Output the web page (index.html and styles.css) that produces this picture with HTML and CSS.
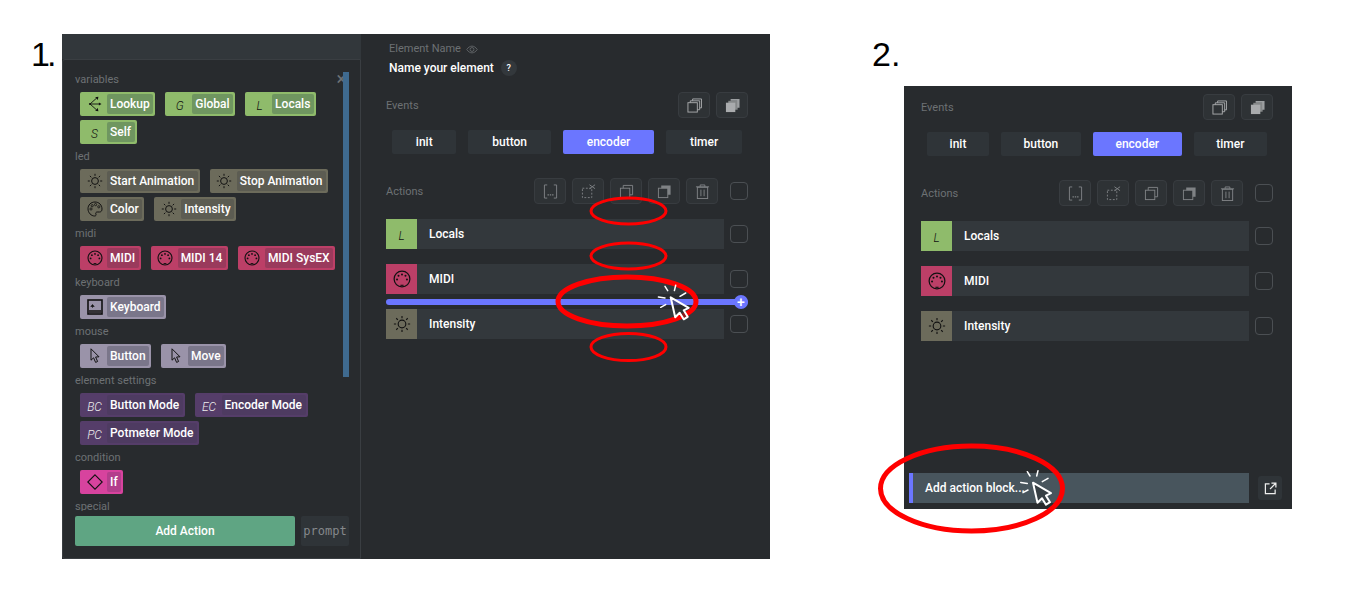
FILE: index.html
```html
<!DOCTYPE html>
<html>
<head>
  <meta charset="UTF-8">
  <meta name="viewport" content="width=device-width,initial-scale=1.0">
  <title>Adding action blocks</title>
  <link rel="stylesheet" href="styles.css">
</head>
<body>
  <svg class="defs" width="0" height="0">
    <symbol id="i-sun" viewBox="0 0 16 16">
      <g fill="none" stroke="currentColor" stroke-width="1">
        <circle cx="8" cy="8" r="3.4"/>
        <path d="M8 .8v2M8 13.2v2M.8 8h2M13.2 8h2M2.9 2.9l1.4 1.4M11.7 11.7l1.4 1.4M2.9 13.1l1.4-1.4M11.7 4.3l1.4-1.4"/>
      </g>
    </symbol>
    <symbol id="i-midi" viewBox="0 0 16 16">
      <circle cx="8" cy="8" r="7" fill="none" stroke="currentColor" stroke-width="1.1"/>
      <path d="M6.6 13.6h2.8" stroke="currentColor" stroke-width="1"/>
      <g fill="currentColor">
        <circle cx="3.6" cy="8.4" r=".9"/><circle cx="4.9" cy="5.2" r=".9"/><circle cx="8" cy="3.9" r=".9"/><circle cx="11.1" cy="5.2" r=".9"/><circle cx="12.4" cy="8.4" r=".9"/>
      </g>
    </symbol>
    <symbol id="i-palette" viewBox="0 0 16 16">
      <path d="M8 1C3.9 1 1 4 1 7.8 1 11.8 4.2 15 7.6 15c1.4 0 1.7-1 1.3-1.9-.5-1.1.1-2.1 1.3-2.1h2.3c1.600 0 2.500-1.200 2.500-2.900C15 4 12 1 8 1z" fill="none" stroke="currentColor" stroke-width="1"/>
      <g fill="none" stroke="currentColor" stroke-width=".8">
        <circle cx="4" cy="8" r="1.100"/><circle cx="5.200" cy="4.700" r="1.100"/><circle cx="8.600" cy="3.600" r="1.100"/><circle cx="11.800" cy="5.800" r="1.100"/>
      </g>
    </symbol>
    <symbol id="i-lookup" viewBox="0 0 16 16">
      <g fill="none" stroke="currentColor" stroke-width=".9">
        <path d="M3 8h9.500M3 8l6.500-5.800M3 8l6.500 5.800"/>
      </g>
      <circle cx="3" cy="8" r="1.100" fill="currentColor"/>
      <path d="M8.200 1.300l3.200-.6-.6 3.200zM14.500 8l-2.600-1.600v3.200zM8.200 14.700l3.200.6-.6-3.200z" fill="currentColor"/>
    </symbol>
    <symbol id="i-keyboard" viewBox="0 0 16 16">
      <rect x="1" y="1" width="14" height="14" fill="none" stroke="currentColor" stroke-width="1.600"/>
      <path d="M2 11h12v3H2z" fill="currentColor" opacity=".75"/>
      <path d="M5.500 9V6.500M3.800 7.500l1.700-2 1.700 2z" stroke="currentColor" fill="currentColor" stroke-width=".6"/>
    </symbol>
    <symbol id="i-pointer" viewBox="0 0 16 16">
      <path d="M4 .8v11.400l2.600-2.400 2 4.600 2-.9-2-4.500 3.400-.2z" fill="none" stroke="currentColor" stroke-width="1"/>
    </symbol>
    <symbol id="i-diamond" viewBox="0 0 16 16">
      <path d="M8 .8L15.200 8 8 15.200 .8 8z" fill="none" stroke="currentColor" stroke-width="1.100"/>
    </symbol>
    <symbol id="i-copy" viewBox="0 0 16 16">
      <g fill="none" stroke="currentColor" stroke-width="1">
        <rect x="1" y="5" width="10" height="10"/>
        <path d="M3.500 5V3h10v9.500H11M6 3V1h9.500v9.500h-2"/>
      </g>
    </symbol>
    <symbol id="i-copy-all" viewBox="0 0 16 16">
      <path d="M3.500 3h10v9.500h-10z" fill="currentColor" opacity=".7"/>
      <path d="M6 1h9.500v9.500H13V3H6z" fill="currentColor" opacity=".9"/>
      <rect x="1" y="5" width="10" height="10" fill="currentColor"/>
    </symbol>
    <symbol id="i-copy-one" viewBox="0 0 16 16">
      <g fill="none" stroke="currentColor" stroke-width="1">
        <rect x="1.500" y="4.500" width="10" height="10"/>
        <path d="M4.500 4.500v-3h10v10h-3"/>
      </g>
    </symbol>
    <symbol id="i-copy-solid" viewBox="0 0 16 16">
      <path d="M4.500 1.500h10v10h-3v-7h-7z" fill="currentColor"/>
      <rect x="1.500" y="4.500" width="10" height="10" fill="none" stroke="currentColor" stroke-width="1"/>
    </symbol>
    <symbol id="i-bracket" viewBox="0 0 16 16">
      <g fill="none" stroke="currentColor" stroke-width="1">
        <path d="M4.500 1H1.500v14h3M11.500 1h3v14h-3"/>
      </g>
      <path d="M4.800 10.800h1.500v1.500H4.800zM7.250 10.800h1.500v1.500H7.250zM9.700 10.800h1.500v1.500H9.700z" fill="currentColor"/>
    </symbol>
    <symbol id="i-cut" viewBox="0 0 16 16">
      <rect x="1.500" y="4.500" width="10" height="10" fill="none" stroke="currentColor" stroke-width="1" stroke-dasharray="2 1.700"/>
      <path d="M9 .8l6 4.200M15 .8L9 5" stroke="currentColor" stroke-width="1" fill="none"/>
    </symbol>
    <symbol id="i-trash" viewBox="0 0 16 16">
      <g fill="none" stroke="currentColor" stroke-width="1">
        <rect x="2.500" y="3.500" width="11" height="12"/>
        <path d="M1 3h14M5.500 3V1h5v2M6.300 6v7M9.700 6v7"/>
      </g>
    </symbol>
    <symbol id="i-eye" viewBox="0 0 16 12">
      <g fill="none" stroke="currentColor" stroke-width="1">
        <path d="M1 6c2-3 4.500-4.500 7-4.500S13 3 15 6c-2 3-4.500 4.500-7 4.500S3 9 1 6z"/>
        <circle cx="8" cy="6" r="2.600"/>
      </g>
    </symbol>
    <symbol id="i-open" viewBox="0 0 14 14">
      <g fill="none" stroke="currentColor" stroke-width="1.300">
        <path d="M6 2H1.500v10.500H12V8M8 1.200h4.800V6M12.600 1.400L6.500 7.500"/>
      </g>
    </symbol>
    <symbol id="i-click" viewBox="-14 -14 36 40" overflow="visible">
      <path d="M-5.700-11l2.700 4.300M5-12l-1.300 5.300M15-4.300L9.300-1M-12.300-.3l6.600 1M-10 10l5-2.700" stroke="#fff" stroke-width="1.500" stroke-linecap="round"/>
      <path d="M0 0l4.500 20L9 15.500 13 22l4-2.500-4-6.500 5-2.500z" fill="#2a2d30" fill-opacity=".55" stroke="#fff" stroke-width="2" stroke-linejoin="round"/>
    </symbol>
  </svg>

  <div class="sheet">
    <section class="figure figure-one">
      <div class="number">1.</div>
      <div class="window window-one">
        <aside class="sidebar">
          <div class="sidebar-top"></div>
          <div class="picker">
            <div class="picker-scroll">
              <span class="picker-close">&times;</span>
              <div class="scrollbar"></div>

              <div class="group">
                <div class="group-name">variables</div>
                <div class="chips">
                  <div class="chip green"><span class="chip-icon"><svg class="ico"><use href="#i-lookup"/></svg></span><span class="chip-label">Lookup</span></div>
                  <div class="chip green"><span class="chip-icon letter">G</span><span class="chip-label">Global</span></div>
                  <div class="chip green"><span class="chip-icon letter">L</span><span class="chip-label">Locals</span></div>
                  <div class="chip green"><span class="chip-icon letter">S</span><span class="chip-label">Self</span></div>
                </div>
              </div>

              <div class="group">
                <div class="group-name">led</div>
                <div class="chips">
                  <div class="chip olive"><span class="chip-icon"><svg class="ico"><use href="#i-sun"/></svg></span><span class="chip-label">Start Animation</span></div>
                  <div class="chip olive"><span class="chip-icon"><svg class="ico"><use href="#i-sun"/></svg></span><span class="chip-label">Stop Animation</span></div>
                  <div class="chip olive"><span class="chip-icon"><svg class="ico"><use href="#i-palette"/></svg></span><span class="chip-label">Color</span></div>
                  <div class="chip olive"><span class="chip-icon"><svg class="ico"><use href="#i-sun"/></svg></span><span class="chip-label">Intensity</span></div>
                </div>
              </div>

              <div class="group">
                <div class="group-name">midi</div>
                <div class="chips">
                  <div class="chip rose"><span class="chip-icon"><svg class="ico"><use href="#i-midi"/></svg></span><span class="chip-label">MIDI</span></div>
                  <div class="chip rose"><span class="chip-icon"><svg class="ico"><use href="#i-midi"/></svg></span><span class="chip-label">MIDI 14</span></div>
                  <div class="chip rose"><span class="chip-icon"><svg class="ico"><use href="#i-midi"/></svg></span><span class="chip-label">MIDI SysEX</span></div>
                </div>
              </div>

              <div class="group">
                <div class="group-name">keyboard</div>
                <div class="chips">
                  <div class="chip lilac"><span class="chip-icon"><svg class="ico"><use href="#i-keyboard"/></svg></span><span class="chip-label">Keyboard</span></div>
                </div>
              </div>

              <div class="group">
                <div class="group-name">mouse</div>
                <div class="chips">
                  <div class="chip lilac"><span class="chip-icon"><svg class="ico"><use href="#i-pointer"/></svg></span><span class="chip-label">Button</span></div>
                  <div class="chip lilac"><span class="chip-icon"><svg class="ico"><use href="#i-pointer"/></svg></span><span class="chip-label">Move</span></div>
                </div>
              </div>

              <div class="group">
                <div class="group-name">element settings</div>
                <div class="chips">
                  <div class="chip plum"><span class="chip-icon letter">BC</span><span class="chip-label">Button Mode</span></div>
                  <div class="chip plum"><span class="chip-icon letter">EC</span><span class="chip-label">Encoder Mode</span></div>
                  <div class="chip plum"><span class="chip-icon letter">PC</span><span class="chip-label">Potmeter Mode</span></div>
                </div>
              </div>

              <div class="group">
                <div class="group-name">condition</div>
                <div class="chips">
                  <div class="chip pink"><span class="chip-icon"><svg class="ico"><use href="#i-diamond"/></svg></span><span class="chip-label">If</span></div>
                </div>
              </div>

              <div class="group">
                <div class="group-name">special</div>
              </div>
            </div>

            <div class="picker-foot">
              <button class="add-action">Add Action</button>
              <button class="prompt">prompt</button>
            </div>
          </div>
        </aside>

        <main class="pane">
          <div class="element-name">
            <div class="element-label">Element Name <svg class="eye"><use href="#i-eye"/></svg></div>
            <div class="element-value">Name your element <span class="help">?</span></div>
          </div>

          <div class="editor">
            <div class="head">
              <span class="head-label">Events</span>
              <div class="tools">
                <span class="tool bright"><svg class="tool-ico"><use href="#i-copy"/></svg></span>
                <span class="tool bright"><svg class="tool-ico"><use href="#i-copy-all"/></svg></span>
              </div>
            </div>
            <div class="tabs">
              <div class="tab">init</div>
              <div class="tab">button</div>
              <div class="tab active">encoder</div>
              <div class="tab">timer</div>
            </div>
            <div class="head head-actions">
              <span class="head-label">Actions</span>
              <div class="tools">
                <span class="tool"><svg class="tool-ico"><use href="#i-bracket"/></svg></span>
                <span class="tool"><svg class="tool-ico"><use href="#i-cut"/></svg></span>
                <span class="tool"><svg class="tool-ico"><use href="#i-copy-one"/></svg></span>
                <span class="tool"><svg class="tool-ico"><use href="#i-copy-solid"/></svg></span>
                <span class="tool"><svg class="tool-ico"><use href="#i-trash"/></svg></span>
                <span class="check"></span>
              </div>
            </div>

            <div class="line">
              <div class="block"><span class="block-icon green letter">L</span><span class="block-name">Locals</span></div>
              <span class="check"></span>
            </div>
            <div class="line tight">
              <div class="block"><span class="block-icon rose"><svg class="block-ico"><use href="#i-midi"/></svg></span><span class="block-name">MIDI</span></div>
              <span class="check"></span>
            </div>
            <div class="drop"><span class="drop-plus">+</span></div>
            <div class="line">
              <div class="block"><span class="block-icon olive"><svg class="block-ico"><use href="#i-sun"/></svg></span><span class="block-name">Intensity</span></div>
              <span class="check"></span>
            </div>
          </div>
        </main>
      </div>
    </section>

    <section class="figure figure-two">
      <div class="number">2.</div>
      <div class="window window-two">
        <div class="editor">
          <div class="head">
            <span class="head-label">Events</span>
            <div class="tools">
              <span class="tool bright"><svg class="tool-ico"><use href="#i-copy"/></svg></span>
              <span class="tool bright"><svg class="tool-ico"><use href="#i-copy-all"/></svg></span>
            </div>
          </div>
          <div class="tabs">
            <div class="tab">init</div>
            <div class="tab">button</div>
            <div class="tab active">encoder</div>
            <div class="tab">timer</div>
          </div>
          <div class="head head-actions">
            <span class="head-label">Actions</span>
            <div class="tools">
              <span class="tool"><svg class="tool-ico"><use href="#i-bracket"/></svg></span>
              <span class="tool"><svg class="tool-ico"><use href="#i-cut"/></svg></span>
              <span class="tool"><svg class="tool-ico"><use href="#i-copy-one"/></svg></span>
              <span class="tool"><svg class="tool-ico"><use href="#i-copy-solid"/></svg></span>
              <span class="tool"><svg class="tool-ico"><use href="#i-trash"/></svg></span>
              <span class="check"></span>
            </div>
          </div>

          <div class="line">
            <div class="block"><span class="block-icon green letter">L</span><span class="block-name">Locals</span></div>
            <span class="check"></span>
          </div>
          <div class="line">
            <div class="block"><span class="block-icon rose"><svg class="block-ico"><use href="#i-midi"/></svg></span><span class="block-name">MIDI</span></div>
            <span class="check"></span>
          </div>
          <div class="line">
            <div class="block"><span class="block-icon olive"><svg class="block-ico"><use href="#i-sun"/></svg></span><span class="block-name">Intensity</span></div>
            <span class="check"></span>
          </div>
        </div>

        <div class="add-row">
          <div class="add-block">Add action block...</div>
          <span class="open-btn"><svg class="open-ico"><use href="#i-open"/></svg></span>
        </div>
      </div>
    </section>
  </div>

  <!-- red marks and click cursors drawn over both shots -->
  <svg class="marks" width="1357" height="594">
    <g fill="none" stroke="#f00">
      <ellipse cx="628.500" cy="211" rx="37.500" ry="13" stroke-width="3"/>
      <ellipse cx="628.500" cy="256" rx="37.500" ry="13" stroke-width="3"/>
      <ellipse cx="627" cy="301.500" rx="69" ry="24.500" stroke-width="5"/>
      <ellipse cx="628.500" cy="347" rx="37.500" ry="13.500" stroke-width="3"/>
      <ellipse cx="971.500" cy="488.500" rx="91" ry="42.500" stroke-width="5"/>
    </g>
    <use href="#i-click" x="656.700" y="283.300" width="36" height="40"/>
    <use href="#i-click" x="1019" y="468.700" width="36" height="40"/>
  </svg>
</body>
</html>
```

FILE: styles.css
```css
body {
  margin: 0;
  position: relative;
  width: 1357px;
  height: 594px;
  overflow: hidden;
  background: #fff;
  font-family: Roboto, Arial, sans-serif;
}

.defs {
  position: absolute;
}

.sheet {
  display: flex;
  align-items: flex-start;
  padding: 34px 0 0 33px;
}

.figure {
  display: flex;
  align-items: flex-start;
}

.figure-two {
  margin-left: 102px;
}

.number {
  font-family: "Liberation Sans", Arial, sans-serif;
  font-size: 34px;
  line-height: 40px;
  color: #000;
}

.figure-one .number {
  width: 31px;
  margin-left: -2px;
  letter-spacing: -3px;
}

.figure-two .number {
  width: 32px;
}

.window {
  display: flex;
  background: #282b2e;
  color: #fff;
}

.window-one {
  width: 708px;
  height: 525px;
}

.window-two {
  flex-direction: column;
  width: 388px;
  height: 423px;
  margin-top: 52px;
  padding-top: 8px;
  box-sizing: border-box;
}

/* left column with the action picker */
.sidebar {
  display: flex;
  flex-direction: column;
  width: 299px;
  flex: none;
}

.sidebar-top {
  height: 25px;
  background: #32373b;
  flex: none;
}

.picker {
  flex: 1;
  display: flex;
  flex-direction: column;
  min-height: 0;
  border: 1px solid #3a3e42;
  border-radius: 3px 0 0 3px;
}

.picker-scroll {
  position: relative;
  flex: 1;
  min-height: 0;
  overflow: hidden;
  padding: 13px 21px 0 12px;
}

.picker-close {
  position: absolute;
  top: 10px;
  right: 14px;
  font-size: 18px;
  line-height: 18px;
  color: #6c7074;
}

.scrollbar {
  position: absolute;
  top: 12px;
  right: 11px;
  width: 6px;
  height: 305px;
  background: #3f6a8f;
}

.group {
  margin-bottom: 6px;
}

.group-name {
  font-size: 11px;
  line-height: 14px;
  color: #6d7174;
  margin-bottom: 5px;
}

.chips {
  display: flex;
  flex-wrap: wrap;
  gap: 4px 10px;
  padding-left: 5px;
}

.chip {
  display: flex;
  height: 24px;
  box-sizing: border-box;
  padding: 2px;
  border-radius: 2px;
  color: #111;
}

.chip-icon {
  display: flex;
  align-items: center;
  justify-content: center;
  width: 25px;
}

.chip-label {
  display: flex;
  align-items: center;
  padding: 0 3.5px 0 3px;
  border-radius: 2px;
  font-size: 12px;
  font-weight: 500;
  color: #fff;
}

.letter {
  font-style: italic;
  font-size: 12px;
  font-weight: 300;
  padding-top: 3px;
  box-sizing: border-box;
}

.ico {
  width: 16px;
  height: 16px;
}

.green { background: #8fbb6b; }
.green .chip-label { background: #6f9660; }
.olive { background: #6c6b5b; }
.olive .chip-label { background: #5c5c52; }
.rose { background: #bc3f67; }
.rose .chip-label { background: #9a3a5c; }
.lilac { background: #9a93a9; }
.lilac .chip-label { background: #7a768a; }
.plum { background: #553d69; color: #eee; }
.plum .chip-label { background: #4e3b61; }
.pink { background: #d7439e; }
.pink .chip-label { background: #b33e8c; }

.picker-foot {
  display: flex;
  gap: 6px;
  padding: 5px 11px 12px 12px;
}

.add-action {
  width: 220px;
  height: 30px;
  border: none;
  border-radius: 2px;
  background: #5fa583;
  color: #fff;
  font-family: Roboto, Arial, sans-serif;
  font-size: 12px;
  font-weight: 500;
}

.prompt {
  width: 48px;
  height: 30px;
  padding: 0;
  border: none;
  border-radius: 2px;
  background: #2f3438;
  color: #85888b;
  font-family: "DejaVu Sans Mono", "Liberation Mono", monospace;
  font-size: 12px;
}

/* right column */
.pane {
  flex: 1;
  padding: 8px 22px 0 25px;
}

.element-name {
  padding-left: 3px;
  height: 50px;
}

.element-label {
  display: flex;
  align-items: center;
  gap: 5px;
  font-size: 11px;
  line-height: 14px;
  color: #6d7174;
}

.eye {
  width: 12px;
  height: 9px;
}

.element-value {
  display: flex;
  align-items: center;
  gap: 7px;
  margin-top: 4px;
  font-size: 12px;
  font-weight: 500;
  line-height: 16px;
}

.help {
  width: 16px;
  height: 16px;
  border-radius: 50%;
  background: #33383c;
  font-size: 9px;
  text-align: center;
}

.window-two .editor {
  margin: 0 19px 0 17px;
}

.head {
  display: flex;
  align-items: center;
  justify-content: space-between;
}

.head-label {
  font-size: 11px;
  color: #6d7174;
}

.head-actions {
  margin: 24px 0 15px;
}

.tools {
  display: flex;
  align-items: center;
  gap: 6px;
}

.tool {
  display: flex;
  align-items: center;
  justify-content: center;
  width: 32px;
  height: 26px;
  box-sizing: border-box;
  border: 1px solid #383c40;
  border-radius: 4px;
  background: #2e3235;
  color: #7f8285;
}

.tool.bright {
  color: #a9abad;
}

.tool-ico {
  width: 15px;
  height: 15px;
}

.tools .check {
  margin-left: 6px;
}

.check {
  width: 18px;
  height: 18px;
  flex: none;
  box-sizing: border-box;
  border: 1px solid #4b4f53;
  border-radius: 4px;
}

.tabs {
  display: flex;
  gap: 12px;
  margin-top: 12px;
  padding: 0 6px;
}

.tab {
  flex: auto;
  height: 24px;
  padding: 0 10px;
  border-radius: 2px;
  background: #2f3438;
  font-size: 12px;
  font-weight: 500;
  line-height: 24px;
  text-align: center;
}

.tab.active {
  background: #6b76ff;
}

.line {
  display: flex;
  align-items: center;
  gap: 6px;
  margin-bottom: 15px;
}

.line.tight {
  margin-bottom: 5px;
}

.block {
  flex: 1;
  display: flex;
  align-items: center;
  height: 30px;
  background: #33383c;
}

.block-icon {
  display: flex;
  align-items: center;
  justify-content: center;
  width: 31px;
  height: 30px;
  color: #111;
}

.block-ico {
  width: 18px;
  height: 18px;
}

.block-name {
  margin-left: 12px;
  font-size: 12px;
  font-weight: 500;
}

.drop {
  position: relative;
  height: 6px;
  margin-bottom: 4px;
  border-radius: 3px;
  background: #6b76ff;
}

.drop-plus {
  position: absolute;
  top: -4px;
  right: 0;
  width: 14px;
  height: 14px;
  border-radius: 50%;
  background: #6b76ff;
  font-size: 14px;
  font-weight: 500;
  line-height: 14px;
  text-align: center;
}

.add-row {
  display: flex;
  align-items: center;
  margin: auto 10px 6px 5px;
}

.add-block {
  flex: 1;
  height: 30px;
  box-sizing: border-box;
  padding-left: 12px;
  border-left: 4px solid #6b76ff;
  background: #48555d;
  font-size: 12px;
  font-weight: 500;
  line-height: 30px;
}

.open-btn {
  display: flex;
  align-items: center;
  justify-content: center;
  width: 24px;
  height: 24px;
  margin-left: 9px;
  border-radius: 3px;
  background: #2f3438;
  color: #eee;
}

.open-ico {
  width: 13px;
  height: 13px;
}

.marks {
  position: absolute;
  top: 0;
  left: 0;
}
```
